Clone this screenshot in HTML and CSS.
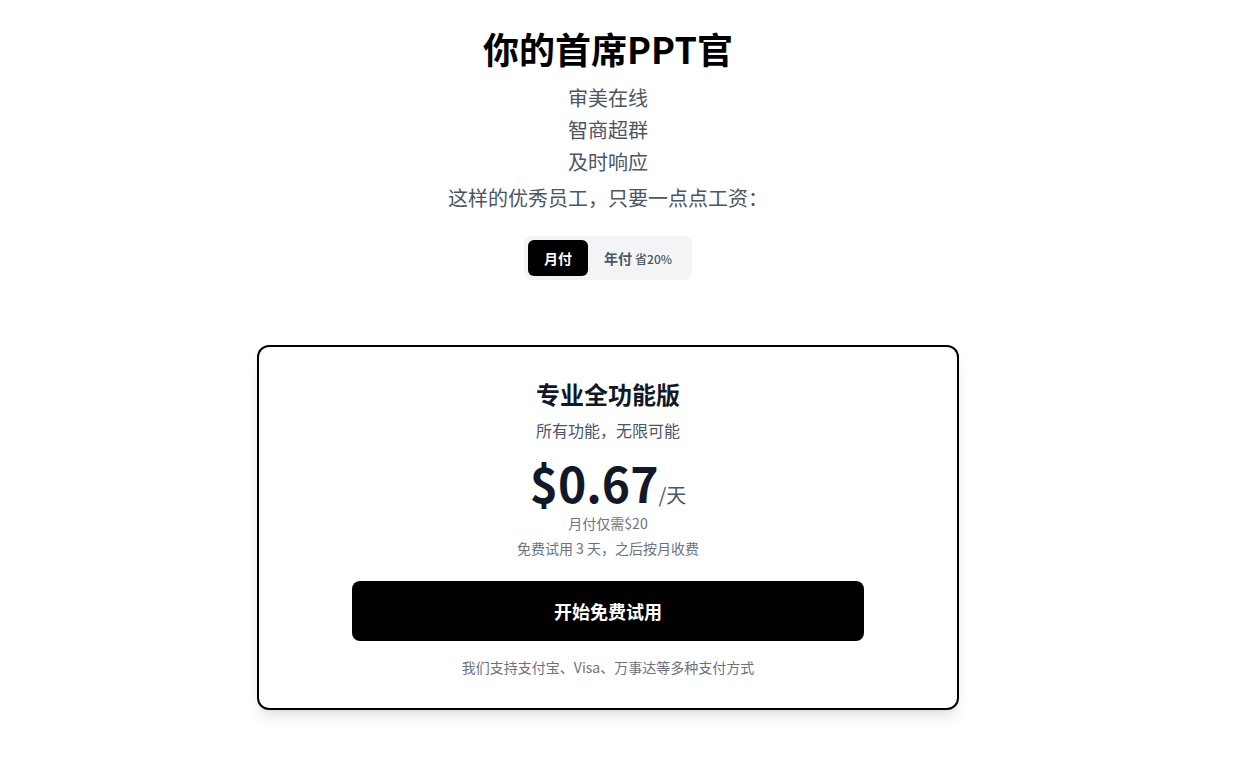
FILE: index.html
```
<!DOCTYPE html>
<html lang="zh-CN">
<head>
    <meta charset="UTF-8">
    <meta name="viewport" content="width=device-width, initial-scale=1.0">
    <title>你的首席PPT官</title>
    <link rel="stylesheet" href="styles.css">
</head>
<body>
    <div class="hero">
        <h1>你的首席PPT官</h1>
        <p class="line">审美在线</p>
        <p class="line">智商超群</p>
        <p class="line">及时响应</p>
        <p class="lead">这样的优秀员工，只要一点点工资：</p>
    </div>

    <div class="toggle">
        <button class="tab active">月付</button>
        <button class="tab">年付 <span class="save">省20%</span></button>
    </div>

    <div class="plan-card">
        <h2>专业全功能版</h2>
        <p class="desc">所有功能，无限可能</p>
        <div class="price">
            <span class="amount">$0.67</span><span class="unit">/天</span>
        </div>
        <p class="note first">月付仅需$20</p>
        <p class="note">免费试用 3 天，之后按月收费</p>
        <button class="cta">开始免费试用</button>
        <p class="note pay">我们支持支付宝、Visa、万事达等多种支付方式</p>
    </div>
</body>
</html>
```
FILE: styles.css
```
body {
    font-family: "Noto Sans CJK SC", "Noto Sans", sans-serif;
    background-color: #fff;
    color: #000;
    margin: 0;
    padding: 28px 22px 40px 0;
    display: flex;
    flex-direction: column;
    align-items: center;
}
.hero {
    text-align: center;
}
h1 {
    font-size: 36px;
    line-height: 40px;
    font-weight: 700;
    margin: 0 0 14px;
}
.line {
    font-size: 20px;
    line-height: 32px;
    color: #4b5563;
    margin: 0;
}
.lead {
    font-size: 20px;
    line-height: 28px;
    color: #4b5563;
    margin: 6px 0 0;
}
.toggle {
    display: flex;
    margin-top: 24px;
    padding: 4px;
    background-color: #f3f4f6;
    border-radius: 8px;
}
.tab {
    font-family: inherit;
    font-size: 14px;
    font-weight: 700;
    height: 36px;
    padding: 0 16px;
    border: none;
    border-radius: 6px;
    background: none;
    color: #4b5563;
    cursor: pointer;
}
.tab.active {
    background-color: #000;
    color: #fff;
}
.save {
    font-size: 12px;
    font-weight: 500;
}
.plan-card {
    width: 702px;
    box-sizing: border-box;
    margin-top: 65px;
    padding: 31px 0 31px;
    border: 2px solid #000;
    border-radius: 12px;
    background-color: #fff;
    box-shadow: 0 10px 15px -3px rgba(0, 0, 0, 0.1), 0 4px 6px -4px rgba(0, 0, 0, 0.1);
    display: flex;
    flex-direction: column;
    align-items: center;
    text-align: center;
}
h2 {
    font-size: 24px;
    line-height: 32px;
    font-weight: 700;
    color: #111827;
    margin: 0;
}
.desc {
    font-size: 16px;
    line-height: 24px;
    color: #4b5563;
    margin: 8px 0 0;
}
.price {
    margin-top: 16px;
    display: flex;
    align-items: baseline;
}
.amount {
    font-size: 48px;
    line-height: 48px;
    font-weight: 700;
    color: #111827;
}
.unit {
    font-size: 20px;
    line-height: 28px;
    color: #4b5563;
}
.note {
    font-size: 14px;
    line-height: 20px;
    color: #6b7280;
    margin: 5px 0 0;
}
.note.first {
    margin-top: 4px;
}
.cta {
    font-family: inherit;
    width: 512px;
    height: 60px;
    margin-top: 23px;
    border: none;
    border-radius: 8px;
    background-color: #000;
    color: #fff;
    font-size: 18px;
    font-weight: 700;
    cursor: pointer;
}
.pay {
    margin-top: 16px;
}
```
